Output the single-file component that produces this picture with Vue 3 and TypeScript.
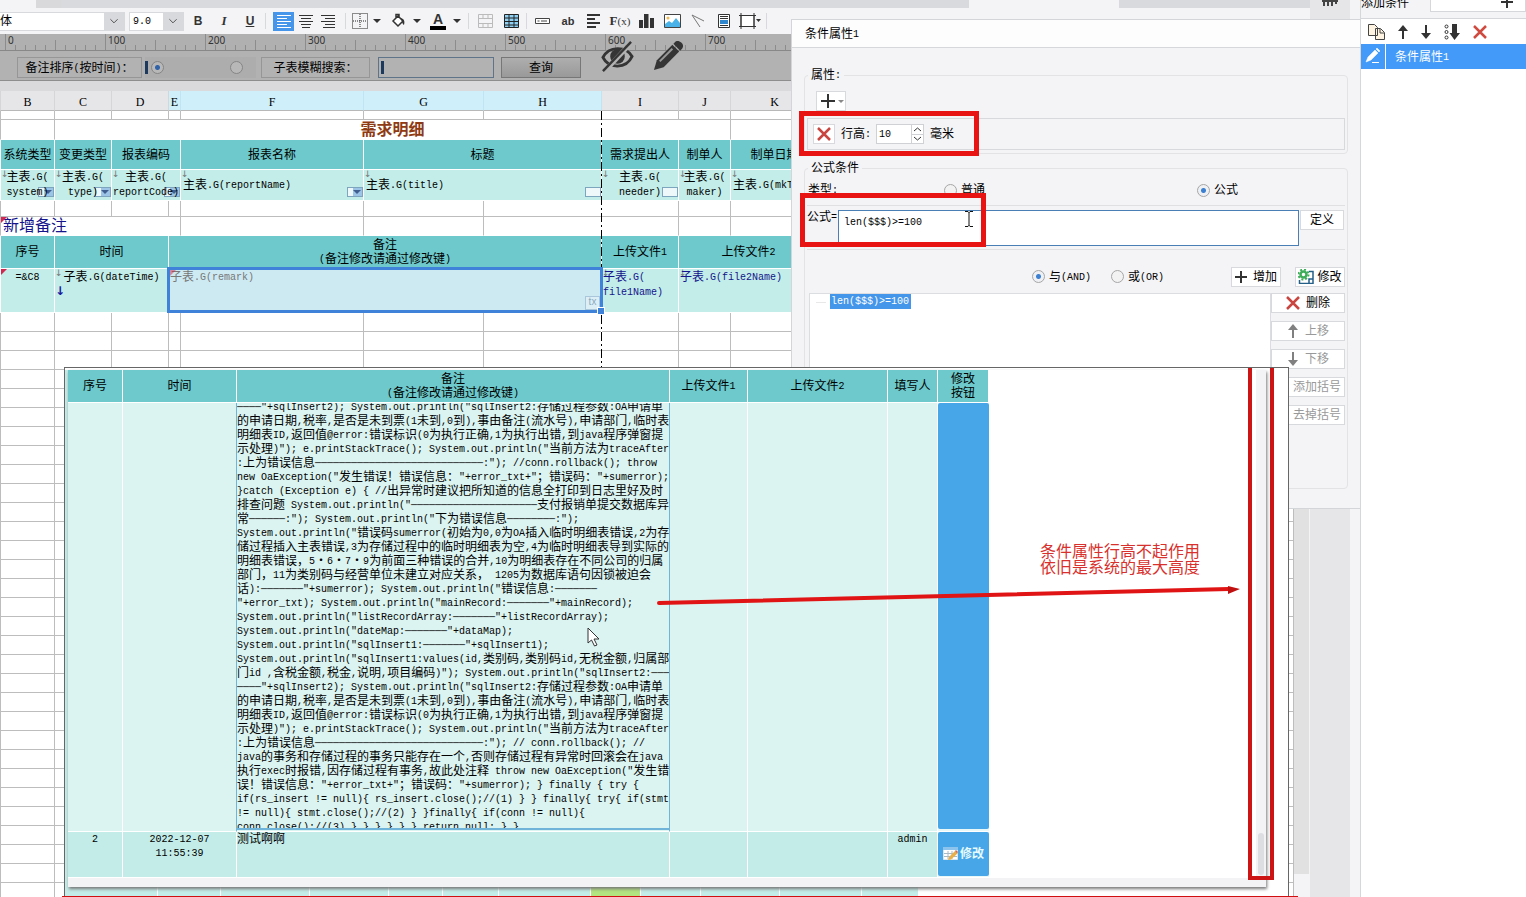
<script setup lang="ts">
import { h, ref, type FunctionalComponent } from 'vue'

/* Mixed text: Latin runs take half the width of an ideograph. */
const T: FunctionalComponent<{ s: string }> = (p) =>
  (p.s.match(/[\u2e80-\uffef]+|[^\u2e80-\uffef]+/g) || []).map((run) =>
    /[\u2e80-\uffef]/.test(run) ? run : h('span', { class: 'half' }, run),
  )
T.props = ['s']

const dash = (n: number) => '─'.repeat(n)
const call = 'System.out.println('

const codeLines: string[] = [
  `${dash(4)}"+sqlInsert2); ${call}"sqlInsert2:存储过程参数:OA申请单`,
  '的申请日期,税率,是否是未到票(1未到,0到),事由备注(流水号),申请部门,临时表',
  '明细表ID,返回值@error:错误标识(0为执行正确,1为执行出错,到java程序弹窗提',
  `示处理)"); e.printStackTrace(); ${call}"当前方法为traceAfter`,
  `:上为错误信息${dash(28)}:"); //conn.rollback(); throw`,
  'new OaException("发生错误！错误信息："+error_txt+"；错误码："+sumerror);',
  '}catch (Exception e) { //出异常时建议把所知道的信息全打印到日志里好及时',
  `排查问题 ${call}"${dash(21)}支付报销单提交数据库异`,
  `常${dash(6)}:"); ${call}"下为错误信息${dash(8)}:");`,
  `${call}"错误码sumerror(初始为0,0为OA插入临时明细表错误,2为存`,
  '储过程插入主表错误,3为存储过程中的临时明细表为空,4为临时明细表导到实际的',
  '明细表错误，5・6・7・9为前面三种错误的合并,10为明细表存在不同公司的归属',
  '部门，11为类别码与经营单位未建立对应关系， 1205为数据库语句因锁被迫会',
  `话):${dash(7)}"+sumerror); ${call}"错误信息:${dash(7)}`,
  `"+error_txt); ${call}"mainRecord:${dash(7)}"+mainRecord);`,
  `${call}"listRecordArray:${dash(7)}"+listRecordArray);`,
  `${call}"dateMap:${dash(7)}"+dataMap);`,
  `${call}"sqlInsert1:${dash(7)}"+sqlInsert1);`,
  `${call}"sqlInsert1:values(id,类别码,类别码id,无税金额,归属部`,
  `门id ,含税金额,税金,说明,项目编码)"); ${call}"sqlInsert2:${dash(3)}`,
  `${dash(4)}"+sqlInsert2); ${call}"sqlInsert2:存储过程参数:OA申请单`,
  '的申请日期,税率,是否是未到票(1未到,0到),事由备注(流水号),申请部门,临时表',
  '明细表ID,返回值@error:错误标识(0为执行正确,1为执行出错,到java程序弹窗提',
  `示处理)"); e.printStackTrace(); ${call}"当前方法为traceAfter`,
  `:上为错误信息${dash(28)}:"); // conn.rollback(); //`,
  'java的事务和存储过程的事务只能存在一个,否则存储过程有异常时回滚会在java',
  '执行exec时报错,因存储过程有事务,故此处注释 throw new OaException("发生错',
  '误！错误信息："+error_txt+"；错误码："+sumerror); } finally { try {',
  'if(rs_insert != null){ rs_insert.close();//(1) } } finally{ try{ if(stmt',
  '!= null){ stmt.close();//(2) } }finally{ if(conn != null){',
  'conn.close();//(3) } } } } } } return null; } }',
]

const columns = [
  { n: 'B' }, { n: 'C' }, { n: 'D' }, { n: 'E', on: true }, { n: 'F', on: true },
  { n: 'G', on: true }, { n: 'H', on: true }, { n: 'I' }, { n: 'J' }, { n: 'K' }, { n: '' },
]
const ticks = Array.from({ length: 130 }, (_, i) => i)
const emptyRows = Array.from({ length: 32 }, (_, i) => i)
const sideButtons = [
  { label: '删除', icon: 'x', off: false },
  { label: '上移', icon: 'up', off: true },
  { label: '下移', icon: 'down', off: true },
  { label: '添加括号', icon: '', off: true },
  { label: '去掉括号', icon: '', off: true },
]
const formula = ref('len($$$)>=100')
const rowHeight = ref('10')
const keyword = ref('')
</script>

<template>
  <div class="app">
    <main class="workspace">
      <section class="editor">
        <div class="tabs"><i class="tab first"></i><i class="tab second"></i><i class="tab third"></i></div>

        <div class="toolbar">
          <div class="combo font"><select aria-label="字体"><option>体</option></select><svg viewBox="0 0 20 19"><path d="M6 7l4 4 4-4" /></svg></div>
          <div class="combo size"><select aria-label="字号"><option>9.0</option></select><svg viewBox="0 0 20 19"><path d="M6 7l4 4 4-4" /></svg></div>
          <button class="tool bold" aria-label="加粗">B</button>
          <button class="tool italic" aria-label="倾斜">I</button>
          <button class="tool under" aria-label="下划线">U</button>
          <i class="sep"></i>
          <button class="tool on" aria-label="左对齐"><svg width="16" height="14"><path d="M1 1.5h14M1 4.5h10M1 7.5h14M1 10.5h10M1 13.500h14" stroke="#fff" /></svg></button>
          <button class="tool narrow" aria-label="居中"><svg width="16" height="14"><path d="M1 1.500h14M3 4.500h10M1 7.500h14M3 10.500h10M4 13.500h8" stroke="#333" /></svg></button>
          <button class="tool narrow" aria-label="右对齐"><svg width="16" height="14"><path d="M1 1.500h14M5 4.500h10M1 7.500h14M5 10.500h10M3 13.500h12" stroke="#333" /></svg></button>
          <i class="sep wide"></i>
          <button class="tool narrow" aria-label="边框"><svg width="16" height="16"><path d="M.5.500h15v15H.5zM8 1v14M1 8h14" fill="none" stroke="#222" stroke-dasharray="1 1" /></svg></button>
          <i class="caret"></i>
          <button class="tool" aria-label="填充"><svg width="16" height="16"><path d="M3 8l5-5 5 5-5 5zM6 5V1.500h3V4" fill="#fff" stroke="#333" stroke-width="1.500" /><path d="M11 5c3 1 4 3 3 7-2-1-2-4-3-7" fill="#333" /></svg></button>
          <i class="caret"></i>
          <button class="tool letter" aria-label="字体颜色">A</button>
          <i class="caret"></i>
          <i class="sep mid"></i>
          <button class="tool" aria-label="合并"><svg width="15" height="14"><path d="M.5.500h14v13H.5zM1 4.500h13M5 1v3M10 1v3M5 10v3M10 10v3M1 9.500h13" fill="none" stroke="#bbb" /></svg></button>
          <button class="tool" aria-label="表格"><svg width="15" height="14"><path d="M.5.500h14v13H.5z" fill="#8ed0f3" stroke="#222" /><path d="M1 4h13M1 7.500h13M1 11h13M5 1v12M10 1v12" stroke="#222" /></svg></button>
          <i class="sep"></i>
          <button class="tool" aria-label="控件"><svg width="15" height="6"><path d="M.5.500h14v5H.5z" fill="#fff" stroke="#444" /><path d="M2.500 3h2M6 3h6" stroke="#444" /></svg></button>
          <button class="tool ab" aria-label="文本">ab</button>
          <button class="tool" aria-label="段落"><svg width="16" height="15"><path d="M1 1h13M1 5h8M1 9h13M1 13h9" stroke="#333" stroke-width="2" /></svg></button>
          <button class="tool fx" aria-label="公式">F<small>(x)</small></button>
          <button class="tool" aria-label="图表"><svg width="15" height="14"><path d="M0 6h4v8H0zM5 0h4.500v14H5zM11 4h4v10h-4z" fill="#333" /></svg></button>
          <button class="tool" aria-label="图片"><svg width="17" height="14"><path d="M.5.500h16v13H.5z" fill="#fff" stroke="#444" /><path d="M1 10l4-3 3 2 4-5 4 5v4H1z" fill="#49b2e8" /><circle cx="4" cy="4" r="1.500" fill="#eeba54" /></svg></button>
          <button class="tool" aria-label="斜线"><svg width="14" height="14"><path d="M1 1l12 6M1 1l8 12" fill="none" stroke="#777" /></svg></button>
          <button class="tool" aria-label="子报表"><svg width="12" height="14"><path d="M.5.500h11v13H.5z" fill="#fff" stroke="#333" /><path d="M2 2.500h8M2 4.500h8M2 11.500h8" stroke="#333" /><path d="M2 6h8v4H2z" fill="#2f86cc" /></svg></button>
          <button class="tool" aria-label="悬浮元素"><svg width="24" height="16"><path d="M3 2.500h13v11H3z" fill="#fff" stroke="#333" /><path d="M1 2.500h17M1 13.500h17M3 0v16M16 0v16" stroke="#333" /><path d="M18 6h5l-2.500 3z" fill="#333" /></svg></button>
          <i class="sep mid"></i>
        </div>

        <div class="ruler">
          <svg class="marks" height="17">
            <g v-for="i in ticks" :key="i">
              <line :x1="i * 10 + 5.5" :x2="i * 10 + 5.5" :y1="i % 10 === 0 ? 0 : i % 5 === 0 ? 6 : 11" y2="17" />
              <text v-if="i % 10 === 0" :x="i * 10 + 8" y="10">{{ i * 10 }}</text>
            </g>
          </svg>
        </div>

        <div class="params">
          <label class="plabel sort" for="sort-asc"><span><T s="备注排序(按时间)：" /></span></label>
          <div class="radios">
            <i class="bar"></i>
            <input id="sort-asc" type="radio" name="sort" checked />
            <input type="radio" name="sort" aria-label="倒序" />
          </div>
          <label class="plabel search" for="kw">子表模糊搜索：</label>
          <div class="field"><i class="bar"></i><input id="kw" v-model="keyword" type="text" /></div>
          <button class="query">查询</button>
        </div>

        <div class="body">
          <div class="sheet">
            <table class="grid">
              <colgroup>
                <col class="c0" /><col class="cB" /><col class="cC" /><col class="cD" /><col class="cE" /><col class="cF" />
                <col class="cG" /><col class="cH" /><col class="cI" /><col class="cJ" /><col class="cK" /><col />
              </colgroup>
              <thead>
                <tr><th></th><th v-for="c in columns" :key="c.n" :class="{ on: c.on }">{{ c.n }}</th></tr>
              </thead>
              <tbody>
                <tr class="h9"><td v-for="n in 12" :key="n"></td></tr>
                <tr class="h20 open"><td></td><td></td><td colspan="8" class="title">需求明细</td><td></td><td></td></tr>
                <tr class="h30 teal">
                  <td></td><td>系统类型</td><td>变更类型</td><td colspan="2">报表编码</td><td>报表名称</td>
                  <td colspan="2">标题</td><td>需求提出人</td><td>制单人</td><td>制单日期</td><td></td>
                </tr>
                <tr class="h31 pale">
                  <td></td>
                  <td><b class="down">↓</b><T s="主表.G(" /><br /><T s="system)" /><i class="drop"></i></td>
                  <td><b class="down">↓</b><T s="主表.G(" /><br /><T s="type)" /><i class="drop"></i></td>
                  <td colspan="2"><b class="down">↓</b><T s="主表.G(" /><br /><T s="reportCode)" /><i class="drop"></i></td>
                  <td class="left"><b class="down">↓</b><T s="主表.G(reportName)" /><i class="drop"></i></td>
                  <td colspan="2" class="left"><b class="down">↓</b><T s="主表.G(title)" /><i class="drop plain"></i></td>
                  <td><b class="down">↓</b><T s="主表.G(" /><br /><T s="needer)" /><i class="drop plain"></i></td>
                  <td><b class="down">↓</b><T s="主表.G(" /><br /><T s="maker)" /></td>
                  <td class="left"><b class="down">↓</b><T s="主表.G(mkTime)" /></td>
                  <td></td>
                </tr>
                <tr class="h16"><td v-for="n in 12" :key="n"></td></tr>
                <tr class="h19 open">
                  <td></td><td colspan="4" class="newnote"><i class="flag"></i>新增备注</td>
                  <td></td><td></td><td></td><td></td><td></td><td></td><td></td>
                </tr>
                <tr class="h33 teal">
                  <td></td><td>序号</td><td colspan="2">时间</td>
                  <td colspan="4">备注<br /><T s="(备注修改请通过修改键)" /></td>
                  <td><T s="上传文件1" /></td><td colspan="2"><T s="上传文件2" /></td><td></td>
                </tr>
                <tr class="h44 pale top">
                  <td></td><td><i class="flag"></i><T s="=&C8" /></td>
                  <td colspan="2"><b class="down">↓</b><T s="子表.G(dateTime)" /><b class="expand">↓</b></td>
                  <td colspan="4" class="left pick">
                    <div class="selected"><i class="flag"></i><T s="子表.G(remark)" /><em>tx</em><i class="handle"></i></div>
                  </td>
                  <td class="left link"><b class="down">↓</b><T s="子表.G(" /><br /><T s="file1Name)" /></td>
                  <td colspan="2" class="left link"><b class="down">↓</b><T s="子表.G(file2Name)" /></td><td></td>
                </tr>
                <tr v-for="r in emptyRows" :key="r" class="h19"><td v-for="n in 12" :key="n"></td></tr>
              </tbody>
            </table>
            <i class="pagebreak"></i>
          </div>
          <div class="vscroll"><i></i></div>
        </div>

        <svg class="eye" viewBox="0 0 34 34"><path d="M2 18C8 6 26 6 32 17 26 30 8 30 2 18z" fill="none" stroke="#353535" stroke-width="3" /><circle cx="17" cy="17" r="7.500" fill="#353535" /><path d="M4 32L31 3" stroke="#b2b2b2" stroke-width="5" /><path d="M2 32L31 2" stroke="#353535" stroke-width="2.500" /></svg>
        <svg class="pen" viewBox="0 0 34 34"><path d="M2 32l3-10L21 6l7 7-16 16z" fill="#353535" /><path d="M8 23L21 10" stroke="#999" stroke-width="2" /><path d="M23 4c3-5 12 1 8 6l-2 2-7-7z" fill="#353535" /></svg>
      </section>
      <div class="rail"><svg width="16" height="6"><path d="M0 1h16M2 1v5M6 1v5M10 1v5M14 1v3" stroke="#444" stroke-width="2" /></svg></div>
      <div class="gutter"></div>

      <section class="panel">
        <h2><T s="条件属性1" /></h2>
        <div class="panelbody">
          <fieldset class="props">
            <legend><T s="属性:" /></legend>
            <button class="plus" aria-label="添加属性"><svg width="14" height="14"><path d="M7 0v14M0 7h14" stroke="#333" stroke-width="2" /></svg><i></i></button>
            <div class="proprow">
              <button class="del" aria-label="删除属性"><svg width="14" height="14"><path d="M1 1l12 12M13 1L1 13" stroke="#c9453f" stroke-width="2.500" /></svg></button>
              <label for="rh"><span><T s="行高:" /></span></label>
              <span class="spin"><input id="rh" v-model="rowHeight" type="text" />
                <span class="arrows"><button aria-label="增"><svg width="9" height="5"><path d="M1 4l3.500-3L8 4" /></svg></button><button aria-label="减"><svg width="9" height="5"><path d="M1 1l3.500 3L8 1" /></svg></button></span>
              </span>
              <span>毫米</span>
            </div>
          </fieldset>
          <fieldset class="cond">
            <legend>公式条件</legend>
            <div class="types">
              <span class="tname"><T s="类型:" /></span>
              <label><input type="radio" name="kind" />普通</label>
              <label><input type="radio" name="kind" checked />公式</label>
            </div>
            <div class="formula">
              <label for="fm"><span><T s="公式=" /></span></label>
              <textarea id="fm" v-model="formula"></textarea>
              <button class="btn">定义</button>
            </div>
            <div class="logic">
              <label><input type="radio" name="logic" checked /><span><T s="与(AND)" /></span></label>
              <label><input type="radio" name="logic" /><span><T s="或(OR)" /></span></label>
              <button class="btn"><svg width="12" height="12"><path d="M6 0v12M0 6h12" stroke="#333" stroke-width="2" /></svg>增加</button>
              <button class="btn mod"><svg width="16" height="15"><path d="M11 2.500h4v12H1.500V11M11 14v-4h4" fill="none" stroke="#245f88" stroke-width="1.500" /><circle cx="5.500" cy="5.500" r="3" fill="none" stroke="#3fae5a" stroke-width="2.500" /><circle cx="5.500" cy="5.500" r="5" fill="none" stroke="#3fae5a" stroke-width="2" stroke-dasharray="2 1.900" /></svg>修改</button>
            </div>
            <div class="lists">
              <div class="tree"><i></i><span><T s="len($$$)>=100" /></span></div>
              <div class="actions">
                <button v-for="b in sideButtons" :key="b.label" class="btn" :disabled="b.off" :class="{ long: !b.icon }">
                  <svg v-if="b.icon === 'x'" width="14" height="14"><path d="M1 1l12 12M13 1L1 13" stroke="#c9453f" stroke-width="2.500" /></svg>
                  <svg v-if="b.icon === 'up'" width="12" height="14"><path d="M6 14V4" stroke="#808080" stroke-width="2" /><path d="M1 6l5-6 5 6z" fill="#808080" /></svg>
                  <svg v-if="b.icon === 'down'" width="12" height="14"><path d="M6 0v10" stroke="#808080" stroke-width="2" /><path d="M1 8l5 6 5-6z" fill="#808080" /></svg>
                  {{ b.label }}
                </button>
              </div>
            </div>
          </fieldset>
        </div>
      </section>

      <section class="preview">
        <div class="back"><i></i><i></i><i></i><i></i><i></i><i></i><i></i><i class="green"></i><i></i><i></i><i></i><i></i></div>
        <div class="popup">
          <table class="result">
            <colgroup><col class="r1" /><col class="r2" /><col class="r3" /><col class="r4" /><col class="r5" /><col class="r6" /><col class="r7" /></colgroup>
            <thead>
              <tr>
                <th>序号</th><th>时间</th><th>备注<br /><T s="(备注修改请通过修改键)" /></th>
                <th><T s="上传文件1" /></th><th><T s="上传文件2" /></th><th>填写人</th><th>修改<br />按钮</th>
              </tr>
            </thead>
            <tbody>
              <tr class="big">
                <td></td><td class="edge"></td>
                <td class="code edge"><div class="clip"><div class="lines"><div v-for="(l, i) in codeLines" :key="i"><T :s="l" /></div></div></div></td>
                <td></td><td></td><td></td><td class="act"><button aria-label="修改"></button></td>
              </tr>
              <tr class="small">
                <td><T s="2" /></td><td><T s="2022-12-07" /><br /><T s="11:55:39" /></td><td class="left">测试啊啊</td>
                <td></td><td></td><td><T s="admin" /></td>
                <td class="act"><button><svg width="15" height="15"><path d="M.5 1.500h14v12H.5z" fill="#fff" stroke="#d8e6ee" /><path d="M0 1h15v3H0z" fill="#8cc4ee" /><path d="M1 7.500h13M1 10.500h13M5 5v8M9 5v8" stroke="#a8bac6" /><path d="M5 14l1-3 6-6 2.500 2.500-6.500 6z" fill="#e8b04c" /><path d="M12 5l1-1 2 2-1 1.500z" fill="#d06850" /></svg>修改</button></td>
              </tr>
            </tbody>
          </table>
          <div class="popscroll"><i></i></div>
        </div>
      </section>

      <svg class="arrow" width="584" height="24"><path d="M2 17L572 3" stroke="#e01414" stroke-width="4" stroke-linecap="round" /><path d="M571 0l12 3-12 5z" fill="#c01010" /></svg>
      <p class="note">条件属性行高不起作用<br />依旧是系统的最大高度</p>
      <i class="mark one"></i><i class="mark two"></i><i class="mark three"></i><i class="redline"></i>
      <svg class="ibeam" width="8" height="16"><path d="M0 .5h3l1 1 1-1h3M4 1v14M0 15.500h3l1-1 1 1h3" fill="none" stroke="#111" /></svg>
      <svg class="pointer" width="13" height="20"><path d="M1 1v15l3.500-3 3 6 2.500-1-3-6H12z" fill="#fff" stroke="#333" /></svg>
    </main>

    <aside class="side">
      <div class="sidehead"><span>添加条件</span><button aria-label="添加条件"><svg width="12" height="12"><path d="M6 0v12M0 6h12" stroke="#333" stroke-width="2" /></svg></button></div>
      <div class="sidetools">
        <button aria-label="复制"><svg width="17" height="16"><path d="M.5.500h6l3 3v8h-9zM7.500 4.500h5l4 4v7h-9z" fill="#fff4e2" stroke="#444" /><path d="M12 5v4h4" fill="none" stroke="#444" /></svg></button>
        <button aria-label="上移"><svg width="10" height="14"><path d="M5 14V4" stroke="#333" stroke-width="2" /><path d="M0 6l5-6 5 6z" fill="#333" /></svg></button>
        <button aria-label="下移"><svg width="10" height="14"><path d="M5 0v10" stroke="#333" stroke-width="2" /><path d="M0 8l5 6 5-6z" fill="#333" /></svg></button>
        <button aria-label="排序"><svg width="16" height="16"><circle cx="2.500" cy="2.500" r="1.500" /><circle cx="2.500" cy="8" r="1.500" /><circle cx="2.500" cy="13.500" r="1.500" /><path d="M8 0h5v9h3l-5.500 7L5.500 9H8z" fill="#333" stroke="none" /></svg></button>
        <button aria-label="删除"><svg width="14" height="14"><path d="M1 1l12 12M13 1L1 13" stroke="#d04a40" stroke-width="2.500" /></svg></button>
      </div>
      <div class="item">
        <svg width="24" height="25"><path d="M5 18l2-5 7-7 3 3-7 7zM15 5l1-1 3 3-1 1z" fill="#fff" stroke="#fff" stroke-width=".5" /><path d="M11 18.500h7" stroke="#fff" /></svg>
        <span><T s="条件属性1" /></span>
      </div>
    </aside>
  </div>
</template>

<style>
body { background: #fff; overflow: hidden; }
.half { font-family: "Liberation Mono", monospace; font-size: 10px; line-height: 0; vertical-align: 1px; }
</style>

<style scoped>
* { box-sizing: border-box; }
.app { display: flex; height: 100vh; overflow: hidden; font: 12px/14px "Liberation Sans", "Noto Sans CJK SC", sans-serif; color: #000; background: #fff; }
button, input, select, textarea { font: inherit; color: inherit; margin: 0; padding: 0; border: 0; border-radius: 0; background: none; outline: none; }
svg { display: block; flex: none; }
.workspace { position: relative; flex: 1; min-width: 0; display: flex; background: #f4f4f6; }
.editor { position: relative; flex: 1; min-width: 0; display: flex; flex-direction: column; background: #dadadd; }
.tabs { display: flex; height: 8px; background: #d8dade; flex: none; }
.tab { background: #f4f4f6; }
.tab.first { width: 36px; }
.tab.second { width: 25px; background: #d9d9dc; margin-right: 908px; }
.tab.third { width: 150px; }

.toolbar { display: flex; align-items: center; height: 26px; flex: none; background: #f4f4f6; white-space: nowrap; }
.combo { display: flex; height: 19px; border: 1px solid #d8d9dc; background: #fff; }
.combo select { flex: 1; min-width: 0; appearance: none; }
.combo svg { width: 20px; background: #d8d9dc; fill: none; stroke: #444; }
.combo.font { width: 125px; border-left: 0; margin-right: 4px; }
.combo.size { width: 55px; margin-right: 1px; }
.combo.size select { padding-left: 3px; font: 10px "Liberation Mono", monospace; }
.tool { width: 26px; height: 20px; flex: none; display: flex; align-items: center; justify-content: center; font-size: 12px; color: #333; }
.tool.narrow { width: 22px; }
.tool.on { width: 21px; height: 19px; background: #4596ea; margin: 0 1px 0 5px; }
.tool.bold { font-weight: bold; }
.tool.italic { font: italic bold 13px "Liberation Serif", serif; }
.tool.under { font-weight: bold; text-decoration: underline; }
.tool.letter { font: bold 14px/14px "Liberation Sans", sans-serif; border-bottom: 4px solid #000; width: 16px; height: 17px; margin: 0 5px; }
.tool.ab { font-weight: bold; font-size: 11px; }
.tool.fx { font: bold 13px "Liberation Serif", serif; }
.tool.fx small { font-size: 11px; font-weight: normal; }
.caret { border: 4px solid transparent; border-top-color: #333; border-bottom: 0; margin: 0 4px 0 2px; flex: none; }
.sep { width: 1px; height: 16px; background: #d8d9dc; margin: 0 2px; flex: none; }
.sep.mid { margin: 0 3px; }
.sep.wide { margin: 0 3px 0 6px; }

.ruler { height: 17px; flex: none; background: #b0b0b0; border-bottom: 1px solid #888; overflow: hidden; }
.marks { width: 100%; }
.marks line { stroke: #8c8c8c; }
.marks text { font: 10px "Noto Sans", sans-serif; fill: #333; }
.params { display: flex; align-items: center; height: 30px; flex: none; background: #b2b2b2; border-bottom: 1px solid #8e8e8e; padding: 4px 0 0 17px; margin-bottom: 10px; }
.plabel { height: 21px; border: 1px solid #969696; display: flex; align-items: center; justify-content: center; }
.plabel.sort { width: 125px; }
.plabel.search { width: 109px; }
.radios { display: flex; align-items: center; width: 111px; height: 21px; margin: 0 5px 0 3px; background: #adadae; }
.radios input:last-child { margin-left: 66px; }
.bar { width: 3px; height: 13px; background: #1d3a5e; margin-right: 3px; }
input[type='radio'] { appearance: none; width: 13px; height: 13px; border: 1px solid #a6a6a6; border-radius: 50%; background: #f2f2f2; flex: none; }
input[type='radio']:checked { background: radial-gradient(#3d7fd0 0 2px, #eef0f4 3px); }
.params input[type='radio'] { background: #b8b8b8; border-color: #858585; }
.params input[type='radio']:checked { background: radial-gradient(#2f62a6 0 2px, #b8b8b8 3px); }
.field { display: flex; align-items: center; width: 116px; height: 21px; border: 1px solid #5f7389; margin: 0 7px 0 8px; padding-left: 2px; }
.field input { width: 100px; }
.query { width: 80px; height: 21px; border: 1px solid #777; background: linear-gradient(#aeaeae, #999); }

.body { flex: 1; min-height: 0; display: flex; background: #fff; }
.sheet { position: relative; flex: 1; min-width: 0; overflow: hidden; }
.grid { width: 100%; table-layout: fixed; border-collapse: separate; border-spacing: 0; }
.c0 { width: 1px; } .cB { width: 54px; } .cC, .cD { width: 57px; } .cE { width: 12px; } .cF { width: 183px; }
.cG { width: 120px; } .cH { width: 118px; } .cI { width: 77px; } .cJ { width: 52px; } .cK { width: 88px; }
.grid th { height: 20px; padding: 2px 0 0; background: #e6e6e8; border-right: 1px solid #d6d6d8; border-bottom: 1px solid #b8b8b8; font: 12px/14px "Liberation Serif", serif; }
.grid th.on { background: #cfeffb; border-right-color: #c0e4f2; }
.grid td { position: relative; z-index: 0; padding: 0; text-align: center; border-right: 1px solid #bdbdbd; border-bottom: 1px solid #bdbdbd; white-space: nowrap; line-height: 14px; }
.grid tr.open td { border-bottom-color: transparent; }
.h9 { height: 9px; } .h16 { height: 16px; } .h19 { height: 19px; } .h20 { height: 20px; } .h30 { height: 30px; }
.h31 { height: 31px; } .h33 { height: 33px; } .h44 { height: 44px; }
.grid .teal td { background: #6dc9cb; border-color: #fff; }
.grid .pale td { background: #c3ede8; border-color: #fff; line-height: 15px; }
.grid td.left { text-align: left; padding-left: 2px; }
.grid td.title { font-size: 16px; line-height: 19px; font-weight: bold; color: #8f3a12; }
.grid td.newnote { font-size: 16px; line-height: 18px; text-align: left; padding-left: 2px; color: #14148c; }
.grid .top td { vertical-align: top; padding-top: 1px; }
.grid td.link { color: #14148c; padding-left: 1px; }
.grid td.pick { z-index: 1; }
.down { position: absolute; z-index: -1; left: 0; top: 0; font: 9px/9px "DejaVu Sans", sans-serif; color: #777; }
.expand { position: absolute; left: 0; top: 16px; font: bold 12px/12px "DejaVu Sans", sans-serif; color: #1818a0; }
.drop { position: absolute; z-index: -1; right: 0; bottom: 3px; width: 16px; height: 10px; border: 1px solid #7da5bd; background: linear-gradient(90deg, #eef8fa 5px, #9bc4e6 5px); }
.drop::after { content: ""; position: absolute; right: 1px; top: 2px; border: 4px solid transparent; border-top-color: #3f5f90; border-bottom: 0; }
.drop.plain { background: #eef8fa; }
.drop.plain::after { display: none; }
.flag { position: absolute; left: 0; top: 0; border-top: 6px solid #d02850; border-right: 6px solid transparent; }
.selected { position: absolute; inset: -2px -2px -1px -2px; border: 3px solid #3f82da; background: #cdeaf3; color: #777; }
.selected .flag { opacity: .5; }
.selected em { position: absolute; right: 0; bottom: 0; width: 15px; height: 14px; border: 1px solid #a9c6da; background: #dceff6; font: 10px/10px "Liberation Sans", sans-serif; text-align: center; color: #8caac0; }
.handle { position: absolute; right: -4px; bottom: -4px; width: 6px; height: 6px; background: #3f82da; outline: 1px solid #fff; }
.pagebreak { position: absolute; left: 601px; top: 20px; bottom: 0; width: 1px; background: repeating-linear-gradient(#000 0 9px, #fff 9px 12px, #000 12px 14px, #fff 14px 17px); }
.vscroll { width: 16px; background: #f4f4f6; padding-bottom: 23px; flex: none; }
.vscroll i { display: block; height: 100%; width: 15px; background: #e1e1e1; }
.rail { width: 40px; background: #e6e6e8; display: flex; justify-content: center; flex: none; }
.gutter { width: 10px; background: #f4f4f6; flex: none; }
.eye { position: absolute; left: 601px; top: 40px; width: 33px; height: 33px; }
.pen { position: absolute; left: 652px; top: 39px; width: 33px; height: 33px; }

.panel { position: absolute; left: 791px; right: 0; top: 19px; height: 490px; background: #f4f4f7; border: 1px solid #d4d5d8; border-right: 0; display: flex; flex-direction: column; }
.panel h2 { margin: 0; height: 28px; padding: 6px 0 0 13px; font-size: 12px; font-weight: normal; line-height: 16px; background: #fdfdfe; border-bottom: 1px solid #d6d7da; }
.panelbody { padding: 20px 12px 0; }
fieldset { margin: 0; padding: 0 2px; border: 1px solid #e3e3e6; border-radius: 4px; min-width: 0; }
legend { padding: 0 3px; margin-left: 1px; line-height: 14px; }
.props { height: 86px; margin-bottom: 7px; }
.plus { display: flex; align-items: center; gap: 3px; width: 30px; height: 20px; margin: 9px 0 7px 9px; padding-left: 4px; border: 1px solid #d8d9dc; background: #fff; }
.plus i { border: 3px solid transparent; border-top-color: #888; border-bottom: 0; }
.proprow { display: flex; align-items: center; gap: 6px; height: 32px; border: 1px solid #d8d9dc; padding-left: 5px; }
.proprow label { width: 29px; }
.del { display: flex; align-items: center; justify-content: center; width: 22px; height: 20px; border: 1px solid #d8d9dc; background: #fff; }
.spin { display: flex; width: 48px; height: 20px; border: 1px solid #d0d1d4; background: #fff; }
.spin input { width: 34px; padding-left: 2px; font: 10px "Liberation Mono", monospace; }
.arrows { width: 13px; display: flex; flex-direction: column; border-left: 1px solid #d0d1d4; }
.arrows button { flex: 1; display: flex; align-items: center; justify-content: center; }
.arrows button + button { border-top: 1px solid #d0d1d4; }
.arrows svg { fill: none; stroke: #333; }
.cond { height: 328px; }
.types { display: flex; align-items: center; height: 31px; border-bottom: 1px solid #e0e0e3; }
.tname { width: 137px; padding-left: 1px; flex: none; }
label { display: flex; align-items: center; gap: 4px; white-space: nowrap; }
.types label { width: 253px; flex: none; }
.types label + label { width: 60px; }
.formula { display: flex; align-items: flex-start; height: 44px; padding-top: 4px; border-bottom: 1px solid #e0e0e3; }
.formula label { width: 31px; height: 14px; }
.formula textarea { flex: 1; height: 36px; border: 1px solid #4a7fb5; background: #fff; resize: none; padding: 5px; font: 10px/14px "Liberation Mono", monospace; margin-right: 1px; }
.btn { display: flex; align-items: center; justify-content: center; gap: 6px; height: 20px; border: 1px solid #d8d9dc; background: #fff; white-space: nowrap; flex: none; }
.formula .btn { width: 44px; margin-right: 1px; }
.logic { display: flex; align-items: center; height: 43px; padding-top: 10px; }
.logic label { margin-left: auto; width: 79px; }
.logic label + label { margin-left: 0; width: 120px; }
.logic .btn { width: 50px; }
.logic .btn + .btn { margin-left: 14px; gap: 3px; }
.lists { display: flex; height: 180px; }
.tree { flex: 1; display: flex; align-items: flex-start; margin-left: 2px; border: 1px solid #dcdde0; background: #fff; }
.tree i { width: 10px; height: 1px; margin: 8px 4px 0 6px; background: #e8e8e8; }
.tree span { padding: 0 2px 0 1px; height: 15px; background: #4496ea; color: #fff; }
.actions { display: flex; flex-direction: column; gap: 8px; }
.actions .btn { width: 74px; }
.actions .btn.long { padding-left: 18px; }
.actions .btn:disabled { color: #999; }

.preview { position: absolute; left: 64px; right: 71px; top: 367px; bottom: 0; background: #fff; border: 1px solid #666; border-bottom: 0; padding: 2px 22px 0 3px; }
.back { position: absolute; left: 0; top: 2px; bottom: 0; display: grid; grid-template-columns: 92px 62px 88px 78px 53px 55px 91px 49px 59px 78px 81px 1fr; gap: 1px; width: 853px; background: #fff; }
.back i { background: #c3ebe7; }
.back .green { background: #b2e480; }
.popup { position: relative; display: flex; height: 517px; background: #fff; border-bottom: 9px solid #f3f3f5; box-shadow: 1px 2px 3px #777; }
.result { width: 921px; table-layout: fixed; border-collapse: separate; border-spacing: 0; flex: none; }
.r1 { width: 55px; } .r2 { width: 114px; } .r3 { width: 433px; } .r4 { width: 78px; } .r5 { width: 140px; } .r6 { width: 50px; } .r7 { width: 51px; }
.result th { height: 33px; padding: 0; font-weight: normal; background: #6dc9cb; border-right: 1px solid #fff; border-bottom: 1px solid #fff; }
.result td { padding: 0; vertical-align: top; text-align: center; border-right: 1px solid #fff; border-bottom: 1px solid #fff; }
.big { height: 428px; } .small { height: 46px; }
.big td { background: #dbf4f1; }
.small td { background: #c3ece8; }
.result td.left { text-align: left; }
.result td.edge { border-right-color: #70b4da; }
.clip { height: 427px; overflow: hidden; border-bottom: 2px solid #70b4da; }
.lines { margin-top: -3px; text-align: left; white-space: pre; line-height: 14px; }
.lines div { height: 14px; }
.result td.act { background: #e8f7f8; border-right: 0; }
.act button { display: flex; align-items: center; justify-content: center; gap: 2px; width: 100%; height: 426px; border-radius: 2px; background: #47a6e8; color: #e6fbff; font-weight: bold; }
.small .act button { height: 44px; }
.popscroll { margin-left: auto; width: 10px; background: #f3f3f6; display: flex; align-items: flex-end; justify-content: center; padding-bottom: 3px; }
.popscroll i { width: 6px; height: 42px; border-radius: 3px; background: #dddee1; }

.arrow { position: absolute; left: 657px; top: 586px; }
.note { position: absolute; left: 1040px; top: 544px; margin: 0; font-size: 16px; line-height: 16px; color: #d8302c; white-space: nowrap; }
.mark { position: absolute; border: 5px solid #e81414; pointer-events: none; }
.mark.one { left: 799px; top: 111px; width: 180px; height: 45px; }
.mark.two { left: 800px; top: 193px; width: 186px; height: 54px; }
.mark.three { left: 1248px; top: 368px; width: 26px; height: 512px; border-width: 0 4px 4px; border-color: #cc1414; }
.redline { position: absolute; left: 62px; bottom: 0; width: 1236px; height: 1px; background: #d01010; }
.ibeam { position: absolute; left: 965px; top: 211px; }
.pointer { position: absolute; left: 587px; top: 627px; }

.side { width: 166px; flex: none; border-left: 1px solid #d6d7da; background: #fff; }
.sidehead { display: flex; height: 19px; background: #f4f4f6; border-bottom: 1px solid #d6d7da; }
.sidehead span { width: 69px; line-height: 6px; }
.sidehead button { flex: 1; height: 12px; border: 1px solid #d6d7da; border-top: 0; background: #fff; display: flex; align-items: flex-end; justify-content: flex-end; padding: 0 12px 3px 0; }
.sidetools { display: flex; align-items: center; gap: 13px; height: 25px; padding-left: 7px; }
.sidetools circle { fill: none; stroke: #333; }
.item { display: flex; align-items: center; height: 25px; background: #439af8; color: #fff; }
.item svg { border-right: 1px solid #fff; width: 25px; }
.item span { padding-left: 9px; }
</style>
